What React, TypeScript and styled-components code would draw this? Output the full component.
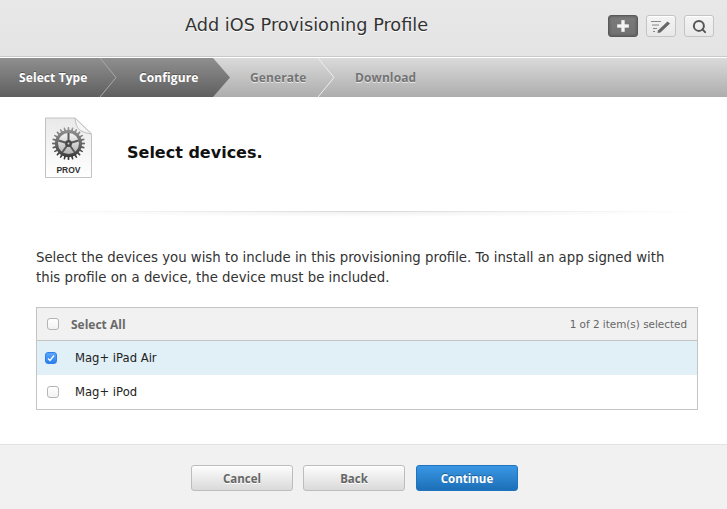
import React, { FC } from "react"
import styled, { createGlobalStyle } from "styled-components"
import { Plus, Search } from "lucide-react"

const GlobalStyle = createGlobalStyle`
html, body {
    margin: 0;
    padding: 0;
    background: #fff;
}
body {
    font-family: "DejaVu Sans", "Liberation Sans", sans-serif;
    color: #333;
}
`

const Page = styled.div`
    width: 727px;
    height: 509px;
    display: flex;
    flex-direction: column;
    overflow: hidden;
`

const Header = styled.header`
    height: 57px;
    box-sizing: border-box;
    display: grid;
    grid-template-columns: 1fr auto;
    align-items: center;
    padding: 0 13px 4px 0;
    background: linear-gradient(#e8e8e8, #e4e4e4);
    border-bottom: 1px solid #c9c9c9;
    box-shadow: 0 1px 0 #fff;
`

const Title = styled.h1`
    margin: 0 0 2px;
    padding-left: 185px;
    font-size: 17.7px;
    font-weight: 400;
    color: #333;
    text-shadow: 0 1px 0 #fff;
`

const Tools = styled.div`
    display: flex;
    gap: 8px;
`

const ToolButton = styled.div<{ $active?: boolean }>`
    width: 30px;
    height: 22px;
    box-sizing: border-box;
    display: flex;
    align-items: center;
    justify-content: center;
    border-radius: 3px;
    border: 1px solid ${p => (p.$active ? "#5a5a5a" : "#c4c4c4")};
    background: ${p => (p.$active ? "linear-gradient(#7c7c7c, #727272)" : "linear-gradient(#f4f4f4, #e8e8e8)")};
    box-shadow: ${p => (p.$active ? "inset 0 0 3px #4c4c4c" : "inset 0 1px 0 #fff")};
    color: ${p => (p.$active ? "#f4f4f4" : "#555")};
`

const Steps = styled.nav`
    margin-top: 1px;
    height: 39px;
    display: flex;
    font-family: "Open Sans", "DejaVu Sans", sans-serif;
    font-size: 12px;
    font-weight: 700;
    letter-spacing: 0.1px;
`

const DARK = "linear-gradient(#8f8f8f, #5f5f5f)"
const LIGHT = "linear-gradient(#dadada, #adadad)"

const Step = styled.div<{ $width: number; $pad: number; $active?: boolean }>`
    flex: ${p => (p.$width ? `0 0 ${p.$width}px` : "1")};
    box-sizing: border-box;
    padding-left: ${p => p.$pad}px;
    display: flex;
    align-items: center;
    background: ${p => (p.$active ? DARK : LIGHT)};
    color: ${p => (p.$active ? "#fff" : "#737373")};
    text-shadow: ${p => (p.$active ? "0 -1px 0 #555" : "0 1px 0 #e8e8e8")};
`

const Joint = styled.div<{ $active?: boolean; $tip?: boolean }>`
    flex: 0 0 17px;
    height: 39px;
    position: relative;
    background: ${p => (p.$active && !p.$tip ? DARK : LIGHT)};

    &::before {
        content: ${p => (p.$tip ? '""' : "none")};
        position: absolute;
        inset: 0;
        background: ${DARK};
        clip-path: polygon(0 0, 100% 50%, 0 100%);
    }

    svg {
        position: absolute;
        inset: 0;
    }
`

const Body = styled.main`
    flex: 1;
    padding: 0 30px 0 36px;
    display: flex;
    flex-direction: column;
`

const Intro = styled.div`
    height: 114px;
    box-sizing: border-box;
    display: flex;
    align-items: flex-start;
    gap: 34px;
    padding: 20px 0 0 9px;
`

const Heading = styled.h2`
    margin: 26px 0 0;
    font-size: 16px;
    font-weight: 700;
    color: #111;
`

const Rule = styled.div`
    height: 1px;
    background: linear-gradient(90deg, rgba(216, 216, 216, 0), #d9d9d9 50%, rgba(216, 216, 216, 0));

    &::after {
        content: "";
        display: block;
        height: 5px;
        margin-top: 1px;
        background: radial-gradient(ellipse 50% 100% at 50% 0, #f1f1f1, rgba(255, 255, 255, 0) 100%);
    }
`

const Lead = styled.p`
    margin: 36px 0 0;
    max-width: 640px;
    font-size: 13.3px;
    line-height: 20px;
    color: #333;
`

const Table = styled.div`
    margin-top: 19px;
    width: 662px;
    box-sizing: border-box;
    border: 1px solid #c4c4c4;
    font-size: 11.6px;
`

const Row = styled.div<{ $kind?: "head" | "selected" }>`
    height: ${p => (p.$kind === "head" ? 33 : 34)}px;
    box-sizing: border-box;
    display: flex;
    align-items: center;
    padding: ${p => (p.$kind === "head" ? "0 10px" : "0 10px 1px")};
    background: ${p => (p.$kind === "head" ? "#f1f1f1" : p.$kind === "selected" ? "#e1eff7" : "#fff")};
    border-bottom: ${p => (p.$kind === "head" ? "1px solid #c4c4c4" : "none")};
`

const Box = styled.span<{ $checked?: boolean }>`
    width: 12px;
    height: 12px;
    box-sizing: border-box;
    flex: none;
    display: flex;
    align-items: center;
    justify-content: center;
    border-radius: 3px;
    margin: ${p => (p.$checked ? "0 2px 0 -2px" : "0")};
    border: 1px solid ${p => (p.$checked ? "#2f80ec" : "#b4b4b4")};
    background: ${p => (p.$checked ? "linear-gradient(#5aa6fa, #2a7ff0)" : "linear-gradient(#fff, #f2f2f2)")};
`

const HeadLabel = styled.span`
    margin-left: 12px;
    font-family: "Open Sans", "DejaVu Sans", sans-serif;
    font-size: 12px;
    font-weight: 700;
    color: #6a6a6a;
    flex: 1;
`

const RowLabel = styled.span`
    margin-left: 16px;
    color: #222;
`

const Count = styled.span`
    font-size: 10.4px;
    color: #666;
`

const Footer = styled.footer`
    height: 65px;
    box-sizing: border-box;
    display: flex;
    justify-content: center;
    gap: 10px;
    padding: 20px 18px 0 0;
    background: #f1f1f1;
    border-top: 1px solid #e2e2e2;
`

const Button = styled.div<{ $primary?: boolean }>`
    width: 102px;
    height: 26px;
    margin-left: ${p => (p.$primary ? 1 : 0)}px;
    box-sizing: border-box;
    display: flex;
    align-items: center;
    justify-content: center;
    border-radius: 3px;
    font-family: "Open Sans", "DejaVu Sans", sans-serif;
    font-size: 11.5px;
    font-weight: 700;
    border: 1px solid ${p => (p.$primary ? "#1f74bd" : "#bdbdbd")};
    background: ${p => (p.$primary ? "linear-gradient(#3a97e4, #1c6fb8)" : "linear-gradient(#fdfdfd, #d9d9d9)")};
    color: ${p => (p.$primary ? "#fff" : "#666")};
    text-shadow: ${p => (p.$primary ? "0 -1px 0 #1c6098" : "0 1px 0 #fff")};
`

const ChevronLine: FC<{ color: string }> = ({ color }) => (
    <svg width="17" height="39">
        <polyline points="0,0 16,19.5 0,39" fill="none" stroke={color} strokeWidth="1" />
    </svg>
)

const EditIcon: FC = () => (
    <svg width="20" height="14" viewBox="0 0 20 14" fill="none" stroke="#888" strokeWidth="1">
        <path d="M0 2.500h10M1 6h7M2 9.500h4M2 12.500h2" />
        <path d="M7 11.500L16.500 2.500l2.500 2L9.500 13.500 6.500 14z" fill="#666" stroke="none" />
    </svg>
)

const gearPath = (cx: number, cy: number, outer: number, inner: number, teeth: number) => {
    const parts: string[] = []
    const step = (Math.PI * 2) / teeth
    for (let i = 0; i < teeth; i++) {
        const a = i * step
        const pts = [
            [inner, a - step * 0.5],
            [inner, a - step * 0.28],
            [outer, a - step * 0.16],
            [outer, a + step * 0.16],
            [inner, a + step * 0.28]
        ]
        pts.forEach(([r, t], j) => {
            const x = (cx + r * Math.cos(t)).toFixed(2)
            const y = (cy + r * Math.sin(t)).toFixed(2)
            parts.push(`${i === 0 && j === 0 ? "M" : "L"}${x} ${y}`)
        })
    }
    return parts.join(" ") + "Z"
}

const ProvIcon: FC = () => (
    <svg width="48" height="62" viewBox="0 0 48 62">
        <defs>
            <linearGradient id="sheet" x1="0" y1="0" x2="0" y2="1">
                <stop offset="0" stopColor="#e9e9e9" />
                <stop offset="1" stopColor="#fff" />
            </linearGradient>
            <linearGradient id="gear" x1="0" y1="0" x2="0" y2="1">
                <stop offset="0" stopColor="#9a9a9a" />
                <stop offset="1" stopColor="#333" />
            </linearGradient>
            <linearGradient id="hollow" x1="0" y1="0" x2="0" y2="1">
                <stop offset="0" stopColor="#f4f4f4" />
                <stop offset="1" stopColor="#b4b4b4" />
            </linearGradient>
        </defs>
        <path d="M.5 1H30L46.500 17V60.500H.5Z" fill="url(#sheet)" stroke="#c2c2c2" />
        <path d="M30 1C31 10 33 15 46.500 17Z" fill="#f5f5f5" stroke="#bdbdbd" />
        <path d={gearPath(23.5, 26.5, 16.5, 13.5, 24)} fill="url(#gear)" />
        <circle cx="23.500" cy="26.500" r="10.500" fill="url(#hollow)" />
        <path
            d="M23.500 26.500V16M23.500 26.500L33.500 23.500M23.500 26.500L29.500 35M23.500 26.500L17.500 35M23.500 26.500L13.500 23.500"
            stroke="#5a5a5a"
            strokeWidth="2"
        />
        <circle cx="23.500" cy="26.500" r="3.500" fill="#4a4a4a" />
        <circle cx="23.500" cy="26.500" r="1" fill="#ccc" />
        <text x="23.500" y="56" textAnchor="middle" fontSize="8.500" fontWeight="700" fontFamily="Liberation Sans" fill="#333">
            PROV
        </text>
    </svg>
)

const App: FC = () => (
    <Page>
        <GlobalStyle />
        <Header>
            <Title>Add iOS Provisioning Profile</Title>
            <Tools>
                <ToolButton $active><Plus size={20} strokeWidth={4} strokeLinecap="butt" /></ToolButton>
                <ToolButton><EditIcon /></ToolButton>
                <ToolButton><Search size={15} strokeWidth={3.2} /></ToolButton>
            </Tools>
        </Header>
        <Steps>
            <Step $active $width={100} $pad={19}>Select Type</Step>
            <Joint $active><ChevronLine color="#a8a8a8" /></Joint>
            <Step $active $width={96} $pad={22}>Configure</Step>
            <Joint $tip />
            <Step $width={88} $pad={20}>Generate</Step>
            <Joint><ChevronLine color="#efefef" /></Joint>
            <Step $width={0} $pad={20}>Download</Step>
        </Steps>
        <Body>
            <Intro>
                <ProvIcon />
                <Heading>Select devices.</Heading>
            </Intro>
            <Rule />
            <Lead>
                Select the devices you wish to include in this provisioning profile. To install an app signed with
                this profile on a device, the device must be included.
            </Lead>
            <Table>
                <Row $kind="head">
                    <Box />
                    <HeadLabel>Select All</HeadLabel>
                    <Count>1 of 2 item(s) selected</Count>
                </Row>
                <Row $kind="selected">
                    <Box $checked>
                        <svg width="8" height="8" viewBox="0 0 8 8" fill="none" stroke="#fff" strokeWidth="1.300">
                            <path d="M1 4.500L3 6.500L7 1.500" />
                        </svg>
                    </Box>
                    <RowLabel>Mag+ iPad Air</RowLabel>
                </Row>
                <Row>
                    <Box />
                    <RowLabel>Mag+ iPod</RowLabel>
                </Row>
            </Table>
        </Body>
        <Footer>
            <Button>Cancel</Button>
            <Button>Back</Button>
            <Button $primary>Continue</Button>
        </Footer>
    </Page>
)

export default App
